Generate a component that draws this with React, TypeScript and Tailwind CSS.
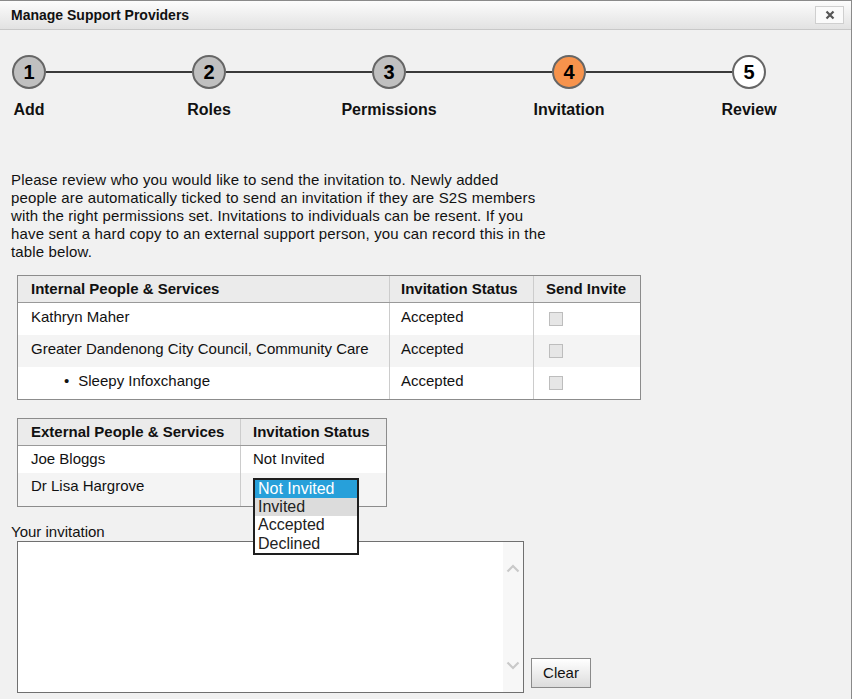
import React from "react"

const steps = [
  { n: 1, label: "Add", tone: "done" },
  { n: 2, label: "Roles", tone: "done" },
  { n: 3, label: "Permissions", tone: "done" },
  { n: 4, label: "Invitation", tone: "current" },
  { n: 5, label: "Review", tone: "todo" },
]

const internal = [
  { name: "Kathryn Maher", status: "Accepted", indent: false },
  { name: "Greater Dandenong City Council, Community Care", status: "Accepted", indent: false },
  { name: "Sleepy Infoxchange", status: "Accepted", indent: true },
]

function Stepper() {
  return (
    <div className="flex items-start pl-[12px] mt-[25px]">
      {steps.map((s, i) => (
        <React.Fragment key={s.n}>
          <div className="flex flex-col items-center w-[34px]">
            <div
              className={
                "w-[34px] h-[34px] rounded-full border-2 border-[#666] flex items-center justify-center text-[20px] font-bold text-black " +
                (s.tone === "current" ? "bg-[#f7934c]" : s.tone === "todo" ? "bg-white" : "bg-[#c0c0c0]")
              }
            >
              {s.n}
            </div>
            <div className="mt-[12px] text-[16px] leading-[18px] font-bold whitespace-nowrap text-[#111]">{s.label}</div>
          </div>
          {i < steps.length - 1 && <div className="w-[146px] h-[2px] bg-[#3a3a3a] mt-[16px]" />}
        </React.Fragment>
      ))}
    </div>
  )
}

function InternalTable() {
  return (
    <div className="ml-[17px] mt-[14px] w-[624px] border border-[#8c8c8c] bg-white">
      {/* Header */}
      <div className="flex h-[27px] bg-[#ebebeb] border-b border-[#999] font-bold">
        <div className="w-[371px] pl-[13px] flex items-center">Internal People &amp; Services</div>
        <div className="w-[144px] pl-[11px] flex items-center border-l border-[#ccc]">Invitation Status</div>
        <div className="w-[107px] pl-[12px] flex items-center border-l border-[#ccc]">Send Invite</div>
      </div>
      {internal.map((r, i) => (
        <div key={r.name} className={"flex h-[32px] " + (i % 2 === 1 ? "bg-[#f4f4f4]" : "bg-white")}>
          <div className="w-[371px] pl-[13px] pt-[5px] whitespace-nowrap">
            {r.indent ? (
              <span className="pl-[33px]">
                <span className="mr-[9px]">•</span>
                {r.name}
              </span>
            ) : (
              r.name
            )}
          </div>
          <div className="w-[144px] pl-[11px] pt-[5px] border-l border-[#ccc]">{r.status}</div>
          <div className="w-[107px] pl-[15px] pt-[9px] border-l border-[#ccc]">
            <div className="w-[14px] h-[14px] bg-[#e6e6e6] border border-[#bdbdbd]" />
          </div>
        </div>
      ))}
    </div>
  )
}

function ExternalTable() {
  return (
    <div className="ml-[17px] mt-[18px] w-[370px] border border-[#8c8c8c] bg-white">
      <div className="flex h-[27px] bg-[#ebebeb] border-b border-[#999] font-bold">
        <div className="w-[222px] pl-[13px] flex items-center whitespace-nowrap">External People &amp; Services</div>
        <div className="w-[146px] pl-[12px] flex items-center border-l border-[#ccc] whitespace-nowrap">Invitation Status</div>
      </div>
      <div className="flex h-[27px] bg-white">
        <div className="w-[222px] pl-[13px] pt-[4px]">Joe Bloggs</div>
        <div className="w-[146px] pl-[12px] pt-[4px] border-l border-[#ccc]">Not Invited</div>
      </div>
      <div className="flex h-[33px] bg-[#f4f4f4]">
        <div className="w-[222px] pl-[13px] pt-[4px]">Dr Lisa Hargrove</div>
        <div className="w-[146px] border-l border-[#ccc] relative">
          {/* open select list */}
          <div className="absolute left-[12px] top-[5px] w-[106px] border-2 border-[#1e1e1e] bg-white text-[16px] leading-[18px] z-10">
            <div className="bg-[#27a0da] text-white pl-[3px] h-[18px]">Not Invited</div>
            <div className="bg-[#dcdcdc] text-[#222] pl-[3px] h-[18px]">Invited</div>
            <div className="text-[#222] pl-[3px] h-[19px]">Accepted</div>
            <div className="text-[#222] pl-[3px] h-[18px]">Declined</div>
          </div>
        </div>
      </div>
    </div>
  )
}

function Chevron({ up }: { up?: boolean }) {
  return (
    <svg width="14" height="9" viewBox="0 0 14 9">
      <path
        d={up ? "M1.5 7.5 L7 2 L12.5 7.5" : "M1.5 1.5 L7 7 L12.5 1.5"}
        fill="none"
        stroke="#c9c9c9"
        strokeWidth="2.2"
      />
    </svg>
  )
}

export default function App() {
  return (
    <div
      className="w-[852px] h-[699px] overflow-hidden bg-[#f1f1f1] border-t border-r border-[#8a8a8a] text-[15px] leading-[18px] text-[#111]"
      style={{ fontFamily: '"Liberation Sans", Arial, sans-serif' }}
    >
      {/* Title bar */}
      <div className="h-[29px] flex items-center justify-between pl-[11px] pr-[7px] bg-gradient-to-b from-[#fcfcfc] to-[#e2e2e2] border-b border-[#c8c8c8]">
        <div className="font-bold text-[14px] text-[#111]">Manage Support Providers</div>
        <button className="w-[29px] h-[18px] bg-[#fafafa] border border-[#cfcfcf] flex items-center justify-center">
          <svg width="10" height="10" viewBox="0 0 10 10">
            <path d="M1.5 1.5 L8.5 8.5 M8.5 1.5 L1.5 8.5" stroke="#555" strokeWidth="2.2" />
          </svg>
        </button>
      </div>

      <Stepper />

      {/* Intro */}
      <p className="mt-[52px] pl-[11px] whitespace-nowrap tracking-[0.15px]">
        Please review who you would like to send the invitation to. Newly added
        <br />
        people are automatically ticked to send an invitation if they are S2S members
        <br />
        with the right permissions set. Invitations to individuals can be resent. If you
        <br />
        have sent a hard copy to an external support person, you can record this in the
        <br />
        table below.
      </p>

      <InternalTable />
      <ExternalTable />

      {/* Invitation message */}
      <div className="mt-[16px] pl-[11px]">Your invitation</div>
      <div className="flex items-end ml-[17px]">
        <div className="w-[507px] h-[152px] border border-[#707070] bg-white flex justify-end">
          <div className="w-[20px] h-full bg-[#f7f7f7] flex flex-col items-center justify-between py-[22px]">
            <Chevron up />
            <Chevron />
          </div>
        </div>
        <button className="ml-[7px] mb-[5px] w-[60px] h-[30px] border border-[#8a8a8a] bg-gradient-to-b from-white to-[#dcdcdc] text-[15px] text-[#111]">
          Clear
        </button>
      </div>
    </div>
  )
}
